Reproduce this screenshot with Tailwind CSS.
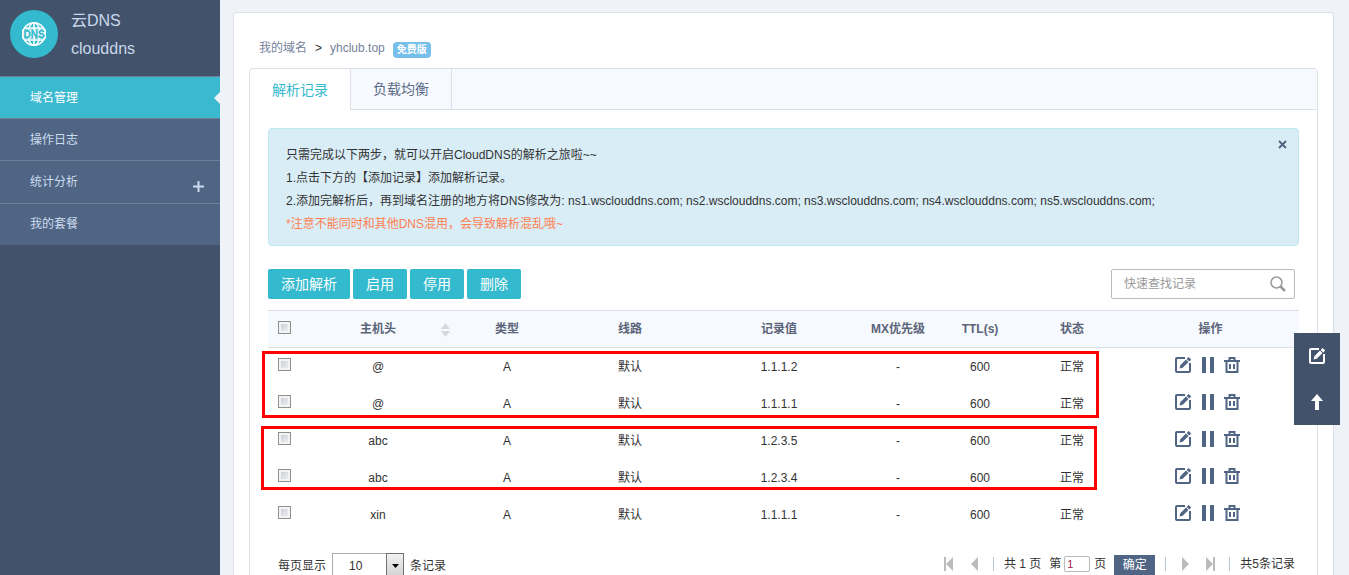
<!DOCTYPE html>
<html lang="zh-CN">
<head>
<meta charset="utf-8">
<meta name="viewport" content="width=device-width, initial-scale=1">
<title>云DNS</title>
<script src="https://cdn.jsdelivr.net/npm/@tailwindcss/browser@4"></script>
</head>
<body class="flex h-screen overflow-hidden bg-[#eff3f8] font-['Liberation_Sans','Noto_Sans_CJK_SC',sans-serif] text-xs text-[#333]">
<svg class="hidden" aria-hidden="true">
  <symbol id="i-edit" viewBox="0 0 18 18">
    <path d="M11 2H3Q2 2 2 3V15Q2 16 3 16H15Q16 16 16 15V7" fill="none" stroke="currentColor" stroke-width="2"/>
    <path d="M5.500 12.500L6.300 9.300L12 3.600L14.500 6L8.700 11.800Z M12.700 2.900L14.600 1L17.200 3.500L15.300 5.400Z" fill="currentColor"/>
  </symbol>
  <symbol id="i-pause" viewBox="0 0 12 16"><path d="M0 0H4V16H0ZM8 0H12V16H8Z" fill="currentColor"/></symbol>
  <symbol id="i-trash" viewBox="0 0 16 16">
    <path d="M0 4H16M5.500 3.500V1H10.500V3.500M2.500 4V15H13.500V4" fill="none" stroke="currentColor" stroke-width="2"/>
    <path d="M5 7H7V12H5ZM9 7H11V12H9Z" fill="currentColor"/>
  </symbol>
</svg>

<aside class="w-[220px] shrink-0 bg-[#42526b]">
  <div class="flex h-[76px] gap-[13px] px-2.5 pt-[7px]">
    <svg class="mt-[3px] size-12 shrink-0" viewBox="0 0 48 48" role="img" aria-label="DNS">
      <circle cx="24" cy="24" r="24" fill="#34bace"/>
      <g fill="none" stroke="#fff" stroke-width="1.500">
        <circle cx="24" cy="24" r="11.300"/>
        <ellipse cx="24" cy="24" rx="6" ry="11.300"/>
        <path d="M24 12.500V35.500M14 18H34M14 30H34"/>
      </g>
      <path d="M12 19.500H36V28.500H12Z" fill="#fff"/>
      <text x="24" y="27.500" text-anchor="middle" font-family="Liberation Sans" font-weight="700" font-size="10" fill="#34bace" stroke="#34bace" stroke-width="0.400">DNS</text>
    </svg>
    <div class="text-base leading-7 text-[#c9d8ec]"><div>云DNS</div><div>clouddns</div></div>
  </div>
  <nav class="bg-[#4f6583] text-[#cddcf0]">
    <a href="#" class="relative block h-[43px] border-y border-[#6d7f99] bg-[#3bb9cf] pl-[30px] leading-[42px] text-white">域名管理
      <svg class="absolute right-0 top-[15px] h-3 w-1.5" viewBox="0 0 6 12"><path d="M6 0V12L0 6Z" fill="#eff3f8"/></svg>
    </a>
    <a href="#" class="block h-[42px] border-b border-[#6d7f99] pl-[30px] leading-[42px]">操作日志</a>
    <a href="#" class="flex h-[43px] items-start justify-between border-b border-[#6d7f99] pl-[30px] pr-4 leading-[42px]">统计分析
      <svg class="mt-5 size-[11px]" viewBox="0 0 11 11"><path d="M0 5.500H11M5.500 0V11" stroke="#cddcf0" stroke-width="2"/></svg>
    </a>
    <a href="#" class="block h-[41px] pl-[30px] leading-[41px]">我的套餐</a>
  </nav>
</aside>

<main class="min-w-0 flex-1 overflow-y-auto pl-[13px] pr-[15px] pt-3 [scrollbar-width:none]">
  <div class="rounded-sm border border-[#dbdfe6] bg-white px-[15px]">
    <div class="flex h-[55px] items-end gap-2 pb-2.5 pl-2.5 leading-4 text-[#75819b]">
      <a href="#" class="pb-0.5">我的域名</a><span class="pb-0.5 text-[#333]">&gt;</span><a href="#" class="pb-0.5">yhclub.top</a>
      <span class="rounded-sm bg-[#76bfea] px-1 text-[10px] font-bold leading-4 text-white">免费版</span>
    </div>
    <section class="rounded-sm border border-[#dbdfe6]">
      <div class="flex h-[41px] text-sm text-[#5b6b86]">
        <button type="button" class="w-[101px] border-r border-[#dbdfe6] text-[#34bace]">解析记录</button>
        <button type="button" class="w-[101px] border-b border-r border-[#dbdfe6] bg-[#f6f9fe]">负载均衡</button>
        <div class="flex-1 border-b border-[#dbdfe6] bg-[#f6f9fe]"></div>
      </div>
      <div class="px-[18px] pb-4 pt-[18px]">
        <div class="flex items-start justify-between rounded border border-[#bce8f1] bg-[#d9edf7] pb-[5px] pl-[17px] pr-[11px] pt-[11px]">
          <div class="py-1 leading-[23px]">
            <p>只需完成以下两步，就可以开启CloudDNS的解析之旅啦~~</p>
            <p>1.点击下方的【添加记录】添加解析记录。</p>
            <p>2.添加完解析后，再到域名注册的地方将DNS修改为: ns1.wsclouddns.com; ns2.wsclouddns.com; ns3.wsclouddns.com; ns4.wsclouddns.com; ns5.wsclouddns.com;</p>
            <p class="text-[#ff7f50]">*注意不能同时和其他DNS混用，会导致解析混乱哦~</p>
          </div>
          <button type="button" aria-label="关闭"><svg class="size-[9px]" viewBox="0 0 9 9"><path d="M1 1L8 8M8 1L1 8" stroke="#4f6583" stroke-width="2"/></svg></button>
        </div>
        <div class="mt-[23px] flex items-center gap-[3px] text-sm text-white">
          <button type="button" class="h-[30px] w-[82px] rounded-[2px] bg-[#34bace]">添加解析</button>
          <button type="button" class="h-[30px] w-[54px] rounded-[2px] bg-[#34bace]">启用</button>
          <button type="button" class="h-[30px] w-[54px] rounded-[2px] bg-[#34bace]">停用</button>
          <button type="button" class="h-[30px] w-[54px] rounded-[2px] bg-[#34bace]">删除</button>
          <div class="ml-auto mr-1 flex h-[30px] w-[184px] items-center rounded-[2px] border border-[#bbb] pl-3 pr-2">
            <input type="text" aria-label="快速查找记录" placeholder="快速查找记录" class="min-w-0 flex-1 text-xs text-[#333] outline-none placeholder:text-[#999]">
            <button type="button" aria-label="搜索"><svg class="size-4" viewBox="0 0 16 16" fill="none" stroke="#999"><circle cx="6.500" cy="6.500" r="5.500" stroke-width="1.500"/><path d="M10.500 10.500L15 15" stroke-width="2.500"/></svg></button>
          </div>
        </div>
        <div class="relative mt-[11px]">
          <table class="w-full table-fixed border-separate border-spacing-0 text-center">
            <colgroup><col class="w-[34px]"><col class="w-[152px]"><col class="w-[106px]"><col class="w-[140px]"><col class="w-[158px]"><col class="w-[80px]"><col class="w-[84px]"><col class="w-[100px]"><col class="w-[177px]"></colgroup>
            <thead class="bg-[#f6f9fe] text-[#5b6478] [&_th]:h-[38px] [&_th]:border-y [&_th]:border-[#dbdfe6] [&_th]:p-0">
              <tr>
                <th><input type="checkbox" aria-label="全选" class="mb-1 ml-2.5 block size-[13px] appearance-none border border-[#8e8f8f] bg-linear-to-br from-[#c5cad2] to-[#f4f4f4] shadow-[inset_0_0_0_2px_#f4f4f4]"></th>
                <th><div class="relative">主机头<svg class="absolute right-1 top-0.5 h-3.5 w-[9px]" viewBox="0 0 9 14"><path d="M4.500 0L9 6H0ZM4.500 14L0 8H9Z" fill="#d5d8dc"/></svg></div></th>
                <th>类型</th><th>线路</th><th>记录值</th><th>MX优先级</th><th>TTL(s)</th><th>状态</th><th>操作</th>
              </tr>
            </thead>
            <tbody id="rows" class="[&_td]:h-[37px] [&_td]:p-0"></tbody>
          </table>
          <div class="pointer-events-none absolute -left-1.5 right-[200px] top-[41px] h-[67px] border-3 border-[#f00]"></div>
          <div class="pointer-events-none absolute -left-[7px] right-[202px] top-[116px] h-16 border-3 border-[#f00]"></div>
        </div>
        <div class="flex items-start justify-between pl-2.5 pr-1 pt-5">
          <div class="flex items-center gap-1.5">
            <label for="size">每页显示</label>
            <div class="relative">
              <select id="size" class="h-[26px] w-[72px] appearance-none border border-[#aaa] bg-white pl-4"><option>10</option><option>20</option><option>50</option></select>
              <span class="pointer-events-none absolute inset-y-0 right-0 flex w-[18px] items-center justify-center border border-[#707070] bg-linear-to-b from-[#f2f2f2] to-[#d0d0d0]"><svg class="h-1 w-[7px]" viewBox="0 0 7 4"><path d="M0 0H7L3.500 4Z"/></svg></span>
            </div>
            <span>条记录</span>
          </div>
          <div class="flex h-5 items-center pt-0.5">
            <button type="button" aria-label="首页"><svg class="mr-[18px] h-3.5 w-[9px]" viewBox="0 0 9 14"><path d="M0 0H2V14H0ZM9 0V14L2 7Z" fill="#bbb"/></svg></button>
            <button type="button" aria-label="上一页"><svg class="mr-[15px] h-3.5 w-[7px]" viewBox="0 0 7 14"><path d="M7 0V14L0 7Z" fill="#bbb"/></svg></button>
            <span class="mr-2.5 h-3.5 w-px bg-[#b7c7db]"></span>
            <span class="mr-2">共 1 页</span><label for="page">第</label>
            <input id="page" type="text" value="1" class="ml-[3px] mr-1 h-4 w-[26px] rounded-[2px] border border-[#bbb] px-0.5 text-[11px] text-[#9c2350]">
            <span class="mr-2">页</span>
            <button type="button" class="mr-2.5 mt-0.5 h-5 w-[41px] bg-[#4f6583] text-white">确定</button>
            <span class="mr-4 h-3.5 w-px bg-[#b7c7db]"></span>
            <button type="button" aria-label="下一页"><svg class="mr-[17px] h-3.5 w-[7px]" viewBox="0 0 7 14"><path d="M0 0V14L7 7Z" fill="#bbb"/></svg></button>
            <button type="button" aria-label="末页"><svg class="mr-3.5 h-3.5 w-[9px]" viewBox="0 0 9 14"><path d="M7 0H9V14H7ZM0 0V14L7 7Z" fill="#bbb"/></svg></button>
            <span class="mr-2.5 h-3.5 w-px bg-[#b7c7db]"></span>
            <span>共5条记录</span>
          </div>
        </div>
      </div>
    </section>
  </div>
</main>

<div class="fixed right-[9px] top-[333px] flex w-[46px] flex-col bg-[#42526b] text-white">
  <button type="button" aria-label="反馈" class="flex h-[46px] items-center justify-center"><svg class="size-[18px]"><use href="#i-edit"/></svg></button>
  <button type="button" aria-label="返回顶部" class="flex h-[46px] items-center justify-center"><svg class="h-4 w-3" viewBox="0 0 12 16"><path d="M6 0L12 7H8V16H4V7H0Z" fill="currentColor"/></svg></button>
</div>

<script>
document.getElementById('rows').innerHTML = [['@','1.1.1.2'],['@','1.1.1.1'],['abc','1.2.3.5'],['abc','1.2.3.4'],['xin','1.1.1.1']].map(([host, ip]) => `<tr>
  <td><input type="checkbox" aria-label="选择 ${host} ${ip}" class="mb-1 ml-2.5 block size-[13px] appearance-none border border-[#8e8f8f] bg-linear-to-br from-[#c5cad2] to-[#f4f4f4] shadow-[inset_0_0_0_2px_#f4f4f4]"></td>
  <td>${host}</td><td>A</td><td>默认</td><td>${ip}</td><td>-</td><td>600</td><td>正常</td>
  <td><div class="mb-1 flex items-center justify-center gap-2.5 pr-2 text-[#4f6583]">
    <button type="button" aria-label="编辑"><svg class="size-[18px]"><use href="#i-edit"/></svg></button>
    <button type="button" aria-label="暂停"><svg class="h-4 w-3"><use href="#i-pause"/></svg></button>
    <button type="button" aria-label="删除"><svg class="size-4"><use href="#i-trash"/></svg></button>
  </div></td></tr>`).join('');
</script>
</body>
</html>
